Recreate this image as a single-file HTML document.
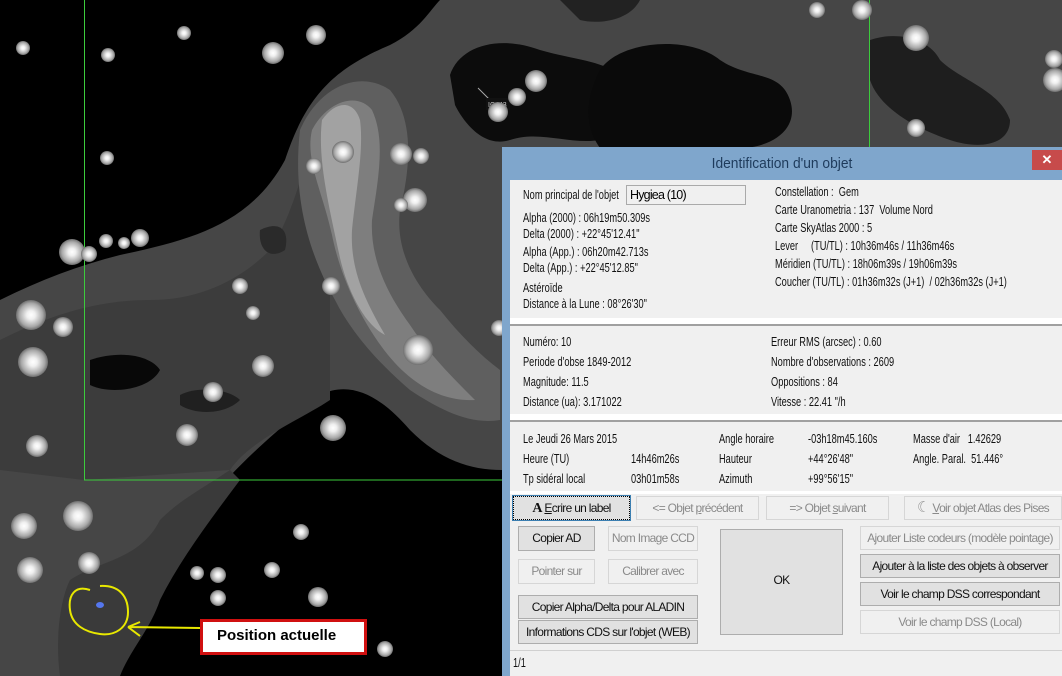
<!DOCTYPE html>
<html><head><meta charset="utf-8"><style>
*{margin:0;padding:0;box-sizing:border-box}
body{width:1062px;height:676px;overflow:hidden;background:#000;position:relative;font-family:"Liberation Sans",sans-serif;}
.dlg{position:absolute;left:502px;top:147px;width:560px;height:529px;background:#7fa6cc;}
.title{position:absolute;left:0;top:0;width:560px;height:33px;text-align:center;font-size:15px;line-height:33px;color:#1e3b5c;transform:scaleX(0.92)}
.close{position:absolute;right:0;top:3px;width:30px;height:20px;background:#c74b4b;color:#fff;font-size:13px;text-align:center;line-height:20px;font-weight:bold}
.inner{position:absolute;left:8px;top:33px;width:552px;height:496px;background:#f0f0f0;}
.t{position:absolute;font-size:12.5px;color:#111;white-space:nowrap;transform:scaleX(0.74);transform-origin:0 0;margin-top:-1px}
.sep{position:absolute;left:0;width:552px;height:8px;background:#fff;border-bottom:2px solid #a0a0a0}
.btn{position:absolute;border:1px solid #adadad;background:#e1e1e1;font-size:12px;text-align:center;color:#111;white-space:nowrap;letter-spacing:-0.7px}
.dis{background:#f0f0f0;border-color:#d6d6d6;color:#8a8a8a}
.st{position:absolute;border-radius:50%;background:radial-gradient(circle,#fff 0,#f0f0f0 20%,#a8a8a8 55%,#3a3a3a 85%,#222 100%)}
</style></head><body>
<svg width="1062" height="676" style="position:absolute;left:0;top:0">
<path d="M0,300 C40,280 80,265 120,255 C190,240 250,225 285,160 C305,100 330,70 390,45 C420,30 430,10 440,0 L1062,0 L1062,160 L502,160 L502,470 C470,470 440,460 410,430 C380,395 350,380 320,395 C290,420 240,460 205,505 C180,545 160,580 140,620 C125,650 110,665 100,676 L0,676 Z" fill="#464646"/>
<path d="M0,340 C40,320 90,300 150,300 C200,300 240,280 270,250 C290,220 300,180 310,150 L330,140 L330,400 C300,420 250,440 230,470 L84,480 L0,470 Z" fill="#3c3c3c"/>
<path d="M160,520 C180,500 200,490 230,470 L240,480 C210,520 180,560 160,600 C150,630 130,650 120,676 L60,676 C55,640 60,600 70,580 C100,560 140,560 160,520Z" fill="#3a3a3a"/>
<path d="M300,130 C320,85 360,70 390,90 C415,120 410,170 400,210 C395,250 415,285 440,310 C460,335 480,355 500,370 L500,420 C470,425 440,410 410,390 C375,360 350,330 335,300 C310,255 292,200 300,130Z" fill="#5f5f5f"/>
<path d="M312,130 C328,100 358,92 372,110 C386,140 378,180 372,220 C370,260 388,295 410,325 C430,355 450,375 475,400 C440,402 410,382 388,355 C360,320 340,275 332,235 C322,190 305,160 312,130Z" fill="#7e7e7e"/>
<path d="M322,120 C336,100 354,100 360,120 C364,150 356,190 352,230 C350,270 365,300 385,335 C365,325 348,292 340,258 C330,210 317,160 322,120Z" fill="#a2a2a2"/>
<path d="M450,75 C460,45 500,35 540,50 C575,60 600,60 620,75 C640,100 630,130 600,140 C570,145 540,130 510,140 C485,148 465,125 455,105Z" fill="#0c0c0c"/>
<path d="M600,70 C620,40 690,35 720,60 C750,80 780,70 790,100 C800,130 770,148 740,148 L600,148 C580,120 590,90 600,70Z" fill="#0a0a0a"/>
<path d="M870,40 C900,30 930,40 940,60 C960,80 1000,90 1010,120 C1010,145 980,150 950,140 C920,130 880,110 870,80Z" fill="#1e1e1e"/>
<path d="M560,0 L640,0 C630,20 600,25 580,20Z" fill="#222"/>
<path d="M90,360 C120,350 150,355 160,370 C150,390 110,395 90,385Z" fill="#080808"/>
<path d="M180,395 C200,385 230,390 240,400 C225,415 195,415 180,405Z" fill="#202020"/>
<path d="M260,230 C280,220 290,230 285,250 C270,260 258,250 260,230Z" fill="#2a2a2a"/>
<rect x="84.5" y="-2" width="785" height="482" fill="none" stroke="#3ccc3c" stroke-width="1"/>
<line x1="478" y1="88" x2="490" y2="100" stroke="#aaa"/>
<rect x="486" y="98" width="24" height="12" fill="#111"/>
<text x="488" y="107" font-size="7" fill="#ccc" font-family="Liberation Sans">IC443</text>
<path d="M90,590 C75,585 68,595 70,610 C72,625 85,632 100,634 C115,636 128,628 128,612 C128,595 118,585 100,586 M128,627 L140,622 M128,627 L140,636 M128,627 L200,628" stroke="#e8e800" stroke-width="2" fill="none"/>
<ellipse cx="100" cy="605" rx="4" ry="3" fill="#5577ee"/>
</svg>
<div class="st" style="left:16px;top:41px;width:14px;height:14px"></div>
<div class="st" style="left:101px;top:48px;width:14px;height:14px"></div>
<div class="st" style="left:177px;top:26px;width:14px;height:14px"></div>
<div class="st" style="left:262px;top:42px;width:22px;height:22px"></div>
<div class="st" style="left:306px;top:25px;width:20px;height:20px"></div>
<div class="st" style="left:100px;top:151px;width:14px;height:14px"></div>
<div class="st" style="left:99px;top:234px;width:14px;height:14px"></div>
<div class="st" style="left:118px;top:237px;width:12px;height:12px"></div>
<div class="st" style="left:131px;top:229px;width:18px;height:18px"></div>
<div class="st" style="left:59px;top:239px;width:26px;height:26px"></div>
<div class="st" style="left:81px;top:246px;width:16px;height:16px"></div>
<div class="st" style="left:16px;top:300px;width:30px;height:30px"></div>
<div class="st" style="left:53px;top:317px;width:20px;height:20px"></div>
<div class="st" style="left:18px;top:347px;width:30px;height:30px"></div>
<div class="st" style="left:26px;top:435px;width:22px;height:22px"></div>
<div class="st" style="left:63px;top:501px;width:30px;height:30px"></div>
<div class="st" style="left:78px;top:552px;width:22px;height:22px"></div>
<div class="st" style="left:11px;top:513px;width:26px;height:26px"></div>
<div class="st" style="left:17px;top:557px;width:26px;height:26px"></div>
<div class="st" style="left:176px;top:424px;width:22px;height:22px"></div>
<div class="st" style="left:203px;top:382px;width:20px;height:20px"></div>
<div class="st" style="left:232px;top:278px;width:16px;height:16px"></div>
<div class="st" style="left:246px;top:306px;width:14px;height:14px"></div>
<div class="st" style="left:322px;top:277px;width:18px;height:18px"></div>
<div class="st" style="left:403px;top:335px;width:30px;height:30px"></div>
<div class="st" style="left:332px;top:141px;width:22px;height:22px"></div>
<div class="st" style="left:390px;top:143px;width:22px;height:22px"></div>
<div class="st" style="left:413px;top:148px;width:16px;height:16px"></div>
<div class="st" style="left:306px;top:158px;width:16px;height:16px"></div>
<div class="st" style="left:403px;top:188px;width:24px;height:24px"></div>
<div class="st" style="left:394px;top:198px;width:14px;height:14px"></div>
<div class="st" style="left:252px;top:355px;width:22px;height:22px"></div>
<div class="st" style="left:320px;top:415px;width:26px;height:26px"></div>
<div class="st" style="left:293px;top:524px;width:16px;height:16px"></div>
<div class="st" style="left:264px;top:562px;width:16px;height:16px"></div>
<div class="st" style="left:210px;top:567px;width:16px;height:16px"></div>
<div class="st" style="left:210px;top:590px;width:16px;height:16px"></div>
<div class="st" style="left:377px;top:641px;width:16px;height:16px"></div>
<div class="st" style="left:308px;top:587px;width:20px;height:20px"></div>
<div class="st" style="left:190px;top:566px;width:14px;height:14px"></div>
<div class="st" style="left:809px;top:2px;width:16px;height:16px"></div>
<div class="st" style="left:852px;top:0px;width:20px;height:20px"></div>
<div class="st" style="left:903px;top:25px;width:26px;height:26px"></div>
<div class="st" style="left:1043px;top:68px;width:24px;height:24px"></div>
<div class="st" style="left:907px;top:119px;width:18px;height:18px"></div>
<div class="st" style="left:525px;top:70px;width:22px;height:22px"></div>
<div class="st" style="left:508px;top:88px;width:18px;height:18px"></div>
<div class="st" style="left:488px;top:102px;width:20px;height:20px"></div>
<div class="st" style="left:1045px;top:50px;width:18px;height:18px"></div>
<div class="st" style="left:491px;top:320px;width:16px;height:16px"></div>
<div style="position:absolute;left:200px;top:619px;width:167px;height:36px;background:#fff;border:3px solid #d01010;font-weight:bold;font-size:15px;padding:5px 0 0 14px;color:#000">Position actuelle</div>

<div class="dlg">
<div class="title">Identification d'un objet</div>
<div class="close">✕</div>
<div class="inner">
 <div class="t" style="left:13px;top:9px">Nom principal de l'objet</div>
 <div style="position:absolute;left:116px;top:5px;width:120px;height:20px;border:1px solid #aaa;background:#f0f0f0;font-size:12.5px;padding:2px 3px;letter-spacing:-0.8px">Hygiea (10)</div>
 <div class="t" style="left:13px;top:32px">Alpha (2000) : 06h19m50.309s</div>
 <div class="t" style="left:13px;top:48px">Delta (2000) : +22°45'12.41"</div>
 <div class="t" style="left:13px;top:66px">Alpha (App.) : 06h20m42.713s</div>
 <div class="t" style="left:13px;top:82px">Delta (App.) : +22°45'12.85"</div>
 <div class="t" style="left:13px;top:102px">Astéroïde</div>
 <div class="t" style="left:13px;top:118px">Distance à la Lune : 08°26'30"</div>
 <div class="t" style="left:265px;top:6px">Constellation :&nbsp; Gem</div>
 <div class="t" style="left:265px;top:24px">Carte Uranometria : 137&nbsp; Volume Nord</div>
 <div class="t" style="left:265px;top:42px">Carte SkyAtlas 2000 : 5</div>
 <div class="t" style="left:265px;top:60px">Lever&nbsp;&nbsp;&nbsp;&nbsp; (TU/TL) : 10h36m46s / 11h36m46s</div>
 <div class="t" style="left:265px;top:78px">Méridien (TU/TL) : 18h06m39s / 19h06m39s</div>
 <div class="t" style="left:265px;top:96px">Coucher (TU/TL) : 01h36m32s (J+1)&nbsp; / 02h36m32s (J+1)</div>
 <div class="sep" style="top:138px"></div>
 <div class="t" style="left:13px;top:156px">Numéro: 10</div>
 <div class="t" style="left:13px;top:176px">Periode d'obse 1849-2012</div>
 <div class="t" style="left:13px;top:196px">Magnitude: 11.5</div>
 <div class="t" style="left:13px;top:216px">Distance (ua): 3.171022</div>
 <div class="t" style="left:261px;top:156px">Erreur RMS (arcsec) : 0.60</div>
 <div class="t" style="left:261px;top:176px">Nombre d'observations : 2609</div>
 <div class="t" style="left:261px;top:196px">Oppositions : 84</div>
 <div class="t" style="left:261px;top:216px">Vitesse : 22.41 "/h</div>
 <div class="sep" style="top:234px"></div>
 <div class="t" style="left:13px;top:253px">Le Jeudi 26 Mars 2015</div>
 <div class="t" style="left:13px;top:273px">Heure (TU)</div>
 <div class="t" style="left:13px;top:293px">Tp sidéral local</div>
 <div class="t" style="left:121px;top:273px">14h46m26s</div>
 <div class="t" style="left:121px;top:293px">03h01m58s</div>
 <div class="t" style="left:209px;top:253px">Angle horaire</div>
 <div class="t" style="left:209px;top:273px">Hauteur</div>
 <div class="t" style="left:209px;top:293px">Azimuth</div>
 <div class="t" style="left:298px;top:253px">-03h18m45.160s</div>
 <div class="t" style="left:298px;top:273px">+44°26'48"</div>
 <div class="t" style="left:298px;top:293px">+99°56'15"</div>
 <div class="t" style="left:403px;top:253px">Masse d'air&nbsp;&nbsp; 1.42629</div>
 <div class="t" style="left:403px;top:273px">Angle. Paral.&nbsp; 51.446°</div>
 <div style="position:absolute;left:0;top:311px;width:552px;height:3px;background:#fff"></div>
 <div class="btn" style="left:3px;top:316px;width:117px;height:24px;line-height:22px;border:1px dotted #000;outline:1px solid #3c7fb1"><b style="font-family:'Liberation Serif';font-size:14px">A</b> <u>E</u>crire un label</div>
 <div class="btn dis" style="left:126px;top:316px;width:123px;height:24px;line-height:22px">&lt;= Objet <u>p</u>récédent</div>
 <div class="btn dis" style="left:256px;top:316px;width:123px;height:24px;line-height:22px">=&gt; Objet <u>s</u>uivant</div>
 <div class="btn dis" style="left:394px;top:316px;width:158px;height:24px;line-height:22px"><span style="font-size:15px;color:#999">☾</span> <u>V</u>oir objet Atlas des Pises</div>
 <div class="btn" style="left:8px;top:346px;width:77px;height:25px;line-height:23px">Copier AD</div>
 <div class="btn dis" style="left:98px;top:346px;width:90px;height:25px;line-height:23px">Nom Image CCD</div>
 <div class="btn dis" style="left:8px;top:379px;width:77px;height:25px;line-height:23px">Pointer sur</div>
 <div class="btn dis" style="left:98px;top:379px;width:90px;height:25px;line-height:23px">Calibrer avec</div>
 <div class="btn" style="left:8px;top:415px;width:180px;height:24px;line-height:22px">Copier Alpha/Delta pour ALADIN</div>
 <div class="btn" style="left:8px;top:440px;width:180px;height:24px;line-height:22px">Informations CDS sur l'objet (WEB)</div>
 <div class="btn" style="left:210px;top:349px;width:123px;height:106px;line-height:100px">OK</div>
 <div class="btn dis" style="left:350px;top:346px;width:200px;height:24px;line-height:22px">Ajouter Liste codeurs (modèle pointage)</div>
 <div class="btn" style="left:350px;top:374px;width:200px;height:24px;line-height:22px">Ajouter à la liste des objets à observer</div>
 <div class="btn" style="left:350px;top:402px;width:200px;height:24px;line-height:22px">Voir le champ DSS correspondant</div>
 <div class="btn dis" style="left:350px;top:430px;width:200px;height:24px;line-height:22px">Voir le champ DSS (Local)</div>
 <div style="position:absolute;left:0;top:470px;width:552px;height:1px;background:#d0d0d0"></div>
 <div class="t" style="left:3px;top:477px">1/1</div>
</div>
</div>
</body></html>
